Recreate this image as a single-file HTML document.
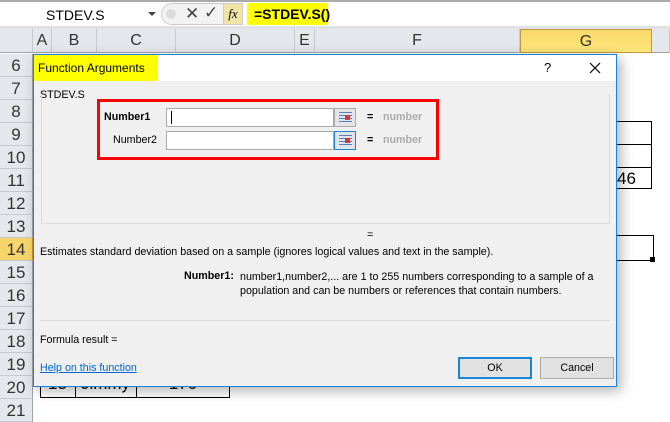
<!DOCTYPE html>
<html><head><style>
*{margin:0;padding:0;box-sizing:border-box}
body{width:670px;height:417px;overflow:hidden;background:#fff;font-family:"Liberation Sans",sans-serif;position:relative}
.a{position:absolute}
.rh{position:absolute;left:0;width:33px;height:23px;background:#e4e7eb;border-bottom:1px solid #c6c9ce;border-right:1px solid #9ea3aa;font-size:17px;color:#333;text-align:center;line-height:23px}
.ch{position:absolute;top:29px;height:24px;background:#e4e7eb;border-right:1px solid #c6c9ce;border-bottom:1px solid #9ea3aa;font-size:16px;color:#333;text-align:center;line-height:24px}
.t{font-size:10.7px;color:#000}
</style></head><body>
<div class="a" style="left:0;top:0;width:670px;height:29px;background:#fff;border-top:2px solid #aaa;border-bottom:2px solid #aaa"></div>
<div class="a" style="left:0;top:26px;width:670px;height:3px;background:#dfe1e5"></div>
<div class="a" style="left:46px;top:7px;font-size:14px">STDEV.S</div>
<div class="a" style="left:148px;top:12px;border-left:4px solid transparent;border-right:4px solid transparent;border-top:4px solid #444"></div>
<div class="a" style="left:161px;top:3px;width:70px;height:22px;border-radius:11px 0 0 11px;background:#f2f2f2;border:1px solid #ccc"></div>
<div class="a" style="left:166px;top:9px;width:10px;height:10px;border-radius:5px;background:#ddd"></div>
<div class="a" style="left:185px;top:4px;font-size:17px;color:#444">✕</div>
<div class="a" style="left:204px;top:3px;font-size:17px;color:#444">✓</div>
<div class="a" style="left:223px;top:3px;width:20px;height:22px;background:#f2e3a6;border:1px solid #ccc;font-family:'Liberation Serif',serif;font-style:italic;font-size:13px;text-align:center;line-height:20px">fx</div>
<div class="a" style="left:247px;top:3px;width:81px;height:22px;background:#ffff00;font-size:14px;font-weight:bold;padding-left:7px;line-height:22px">=STDEV.S()</div>
<div class="ch" style="left:0;width:33px"></div>
<div class="ch" style="left:33px;width:19px">A</div>
<div class="ch" style="left:52px;width:45px">B</div>
<div class="ch" style="left:97px;width:79px">C</div>
<div class="ch" style="left:176px;width:119px">D</div>
<div class="ch" style="left:295px;width:20px">E</div>
<div class="ch" style="left:315px;width:205px">F</div>
<div class="ch" style="left:520px;width:132px;background:linear-gradient(#f9d86a,#fde67a);border:1px solid #c19a3b">G</div>
<div class="ch" style="left:652px;width:18px"></div>
<div class="rh" style="top:54px">6</div><div class="rh" style="top:77px">7</div><div class="rh" style="top:100px">8</div><div class="rh" style="top:123px">9</div><div class="rh" style="top:146px">10</div><div class="rh" style="top:169px">11</div><div class="rh" style="top:192px">12</div><div class="rh" style="top:215px">13</div><div class="rh" style="top:238px;background:#f8d56a;border-right-color:#c19a3b">14</div><div class="rh" style="top:261px">15</div><div class="rh" style="top:284px">16</div><div class="rh" style="top:307px">17</div><div class="rh" style="top:330px">18</div><div class="rh" style="top:353px">19</div><div class="rh" style="top:376px">20</div><div class="rh" style="top:399px">21</div>
<div class="a" style="left:600px;top:121px;width:52px;height:68px;border:1px solid #000"></div>
<div class="a" style="left:600px;top:144px;width:52px;height:1px;background:#000"></div>
<div class="a" style="left:600px;top:167px;width:52px;height:1px;background:#000"></div>
<div class="a" style="left:617px;top:169px;font-size:17px">46</div>
<div class="a" style="left:600px;top:235px;width:54px;height:26px;border:1px solid #000"></div>
<div class="a" style="left:650px;top:257px;width:5px;height:5px;background:#000"></div>
<div class="a" style="left:40px;top:375px;width:190px;height:23px;border:1px solid #000"></div>
<div class="a" style="left:75px;top:375px;width:1px;height:23px;background:#000"></div>
<div class="a" style="left:136px;top:375px;width:1px;height:23px;background:#000"></div>
<div class="a" style="left:40px;top:374px;width:35px;text-align:center;font-size:17px">13</div>
<div class="a" style="left:75px;top:374px;width:61px;text-align:center;font-size:17px">Jimmy</div>
<div class="a" style="left:136px;top:374px;width:94px;text-align:center;font-size:17px">170</div>
<div class="a" style="left:33px;top:54px;width:584px;height:333px;background:#f0f0f0;border:1px solid #1883d7;box-shadow:4px 4px 12px rgba(0,0,0,.3)">
 <div class="a" style="left:0;top:0;width:582px;height:26px;background:#fff"></div>
 <div class="a" style="left:0;top:0;width:124px;height:26px;background:#ffff00;font-size:12px;line-height:26px;padding-left:4px">Function Arguments</div>
 <div class="a" style="left:510px;top:5px;font-size:13px">?</div>
 <svg class="a" style="left:555px;top:7px" width="12" height="12"><path d="M1 1L11 11M11 1L1 11" stroke="#000" stroke-width="1.2"/></svg>
 <div class="a t" style="left:6px;top:34px">STDEV.S</div>
 <div class="a" style="left:7px;top:39px;width:569px;height:130px;border:1px solid #dcdcdc;border-top:none"></div>
 <div class="a" style="left:63px;top:44px;width:342px;height:61px;border:3px solid #f00"></div>
 <div class="a t" style="left:70px;top:56px;font-weight:bold">Number1</div>
 <div class="a t" style="left:79px;top:79px">Number2</div>
 <div class="a" style="left:132px;top:53px;width:168px;height:19px;background:#fff;border:1px solid #aaa"></div>
 <div class="a" style="left:137px;top:56px;width:1px;height:13px;background:#000"></div>
 <div class="a" style="left:300px;top:53px;width:22px;height:19px;background:#e4e4e4;border:1px solid #aaa"></div>
 <div class="a" style="left:132px;top:76px;width:168px;height:19px;background:#fff;border:1px solid #aaa"></div>
 <div class="a" style="left:300px;top:76px;width:22px;height:19px;background:#e4e4e4;border:1px solid #1883d7"></div>
 <div class="a" style="left:305px;top:57px;width:13px;height:11px;background:repeating-linear-gradient(#5a7fb8 0 1px,#dde6f2 1px 3px)"></div>
 <div class="a" style="left:311px;top:60px;width:5px;height:5px;background:#d33"></div>
 <div class="a" style="left:305px;top:80px;width:13px;height:11px;background:repeating-linear-gradient(#5a7fb8 0 1px,#dde6f2 1px 3px)"></div>
 <div class="a" style="left:311px;top:83px;width:5px;height:5px;background:#d33"></div>
 <div class="a t" style="left:333px;top:56px;font-weight:bold">=</div>
 <div class="a t" style="left:349px;top:56px;font-weight:bold;color:#aaa">number</div>
 <div class="a t" style="left:333px;top:79px;font-weight:bold">=</div>
 <div class="a t" style="left:349px;top:79px;font-weight:bold;color:#aaa">number</div>
 <div class="a t" style="left:333px;top:174px">=</div>
 <div class="a t" style="left:6px;top:191px">Estimates standard deviation based on a sample (ignores logical values and text in the sample).</div>
 <div class="a t" style="left:150px;top:215px;font-weight:bold">Number1:</div>
 <div class="a t" style="left:206px;top:215px;line-height:14px">number1,number2,... are 1 to 255 numbers corresponding to a sample of a<br>population and can be numbers or references that contain numbers.</div>
 <div class="a" style="left:6px;top:265px;width:570px;height:1px;background:#dcdcdc"></div>
 <div class="a t" style="left:6px;top:279px">Formula result =</div>
 <div class="a t" style="left:6px;top:307px;color:#0066cc;text-decoration:underline">Help on this function</div>
 <div class="a t" style="left:424px;top:302px;width:74px;height:22px;border:2px solid #1883d7;background:#e1e1e1;text-align:center;line-height:18px">OK</div>
 <div class="a t" style="left:506px;top:302px;width:74px;height:22px;border:1px solid #adadad;background:#e1e1e1;text-align:center;line-height:20px">Cancel</div>
</div>
</body></html>
